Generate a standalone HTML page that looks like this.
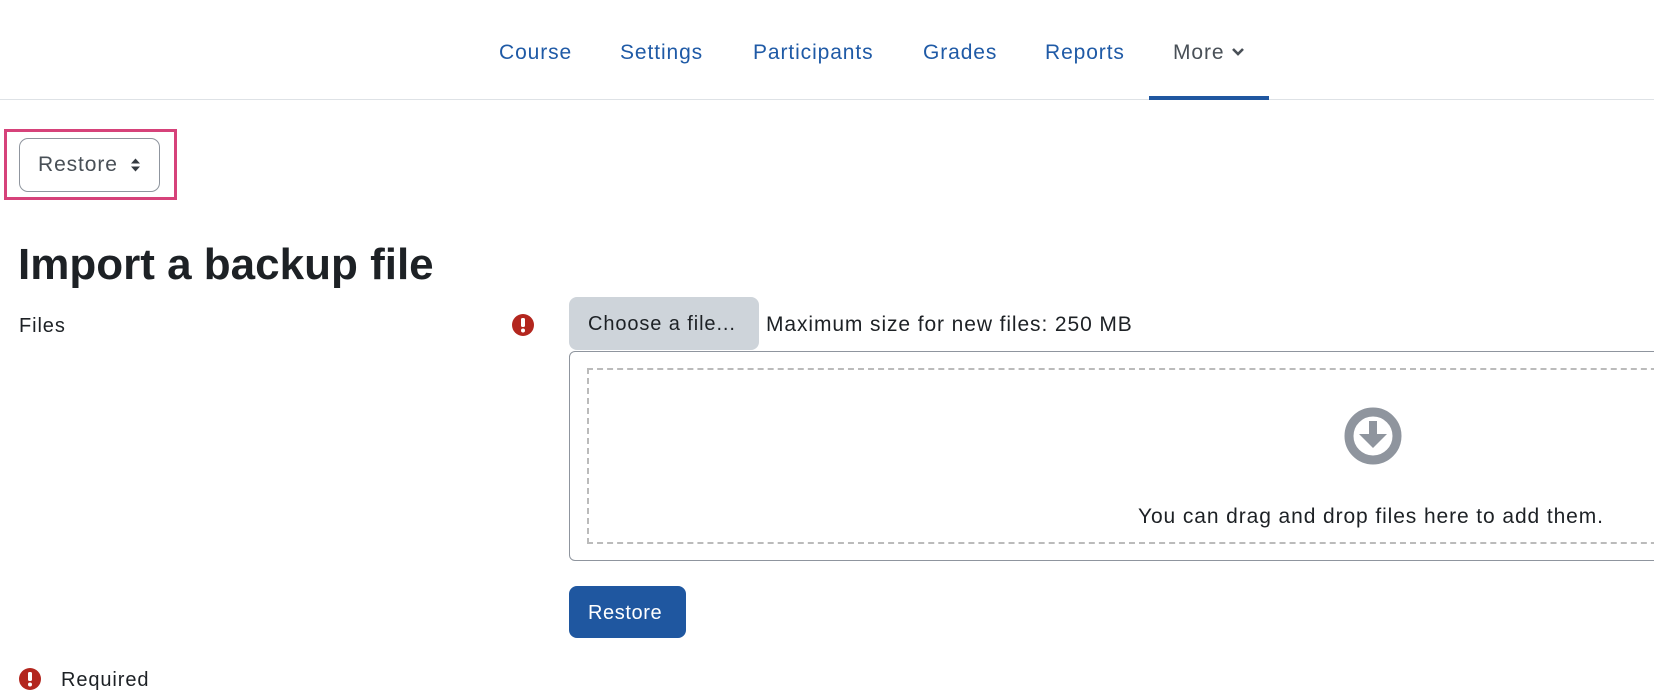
<!DOCTYPE html>
<html><head><style>
*{margin:0;padding:0;box-sizing:border-box}
body{width:1654px;height:700px;overflow:hidden;background:#fff;font-family:"Liberation Sans",sans-serif;color:#1d2125;position:relative;letter-spacing:0.9px}
.a{position:absolute}
.nav{font-size:21px;color:#1f5aa6;top:41px}
</style></head><body>
<div class="a" style="left:0;top:99px;width:1654px;height:1px;background:#dee2e6"></div>
<div class="a nav" style="left:499px">Course</div>
<div class="a nav" style="left:620px">Settings</div>
<div class="a nav" style="left:753px">Participants</div>
<div class="a nav" style="left:923px">Grades</div>
<div class="a nav" style="left:1045px">Reports</div>
<div class="a nav" style="left:1173px;color:#495057">More <svg width="14" height="10" viewBox="0 0 14 10" style="vertical-align:2px"><path d="M2 2l5 5 5-5" fill="none" stroke="#495057" stroke-width="2.6"/></svg></div>
<div class="a" style="left:1149px;top:96px;width:120px;height:4px;background:#1f57a0"></div>

<div class="a" style="left:4px;top:129px;width:173px;height:71px;border:3px solid #d6427a"></div>
<div class="a" style="left:19px;top:138px;width:141px;height:54px;border:1px solid #8f959e;border-radius:9px;font-size:21px;color:#495057;padding:0 0 0 18px;line-height:52px">Restore<svg width="11" height="16" viewBox="0 0 11 16" style="vertical-align:-2px;margin-left:12px"><path d="M1 6.5l4.5-5 4.5 5zM1 9.5l4.5 5 4.5-5z" fill="#343a40"/></svg></div>

<div class="a" style="left:18px;top:240px;font-size:44px;font-weight:bold;letter-spacing:0">Import a backup file</div>
<div class="a" style="left:19px;top:315px;font-size:20px">Files</div>
<svg class="a" style="left:512px;top:314px" width="22" height="22" viewBox="0 0 22 22"><circle cx="11" cy="11" r="11" fill="#b3261e"/><rect x="9" y="4" width="4" height="9" rx="1.5" fill="#fff"/><circle cx="11" cy="16.5" r="2" fill="#fff"/></svg>

<div class="a" style="left:569px;top:297px;width:190px;height:53px;background:#ced4da;border-radius:8px;font-size:20px;padding:16px 0 0 19px">Choose a file...</div>
<div class="a" style="left:766px;top:313px;font-size:21px">Maximum size for new files: 250 MB</div>
<div class="a" style="left:569px;top:351px;width:1100px;height:210px;border:1px solid #8f959e;border-radius:6px"></div>
<div class="a" style="left:587px;top:368px;width:1100px;height:176px;border:2px dashed #bbb"></div>
<svg class="a" style="left:1342px;top:405px" width="62" height="62" viewBox="0 0 62 62"><circle cx="31" cy="31" r="24" fill="none" stroke="#8f959e" stroke-width="9"/><rect x="27" y="16" width="8" height="16" fill="#8f959e"/><path d="M17 29h28L31 43z" fill="#8f959e"/></svg>
<div class="a" style="left:1138px;top:505px;font-size:21px">You can drag and drop files here to add them.</div>

<div class="a" style="left:569px;top:586px;width:117px;height:52px;background:#1f57a0;border-radius:8px;color:#fff;font-size:20px;padding:16px 0 0 19px;letter-spacing:0.6px">Restore</div>

<svg class="a" style="left:19px;top:668px" width="22" height="22" viewBox="0 0 22 22"><circle cx="11" cy="11" r="11" fill="#b3261e"/><rect x="9" y="4" width="4" height="9" rx="1.5" fill="#fff"/><circle cx="11" cy="16.5" r="2" fill="#fff"/></svg>
<div class="a" style="left:61px;top:669px;font-size:20px">Required</div>
</body></html>
